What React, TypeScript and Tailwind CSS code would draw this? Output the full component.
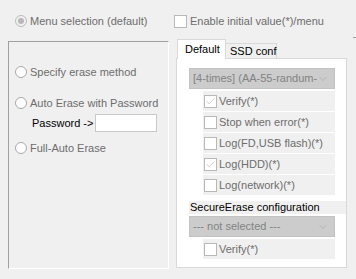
import { Check, ChevronDown } from 'lucide-react';

const font = { fontFamily: '"Liberation Sans", Arial, sans-serif' };

function Radio({ checked = false, disabled = false }: { checked?: boolean; disabled?: boolean }) {
  return (
    <span
      className={`w-[12px] h-[12px] rounded-full border flex items-center justify-center shrink-0 ${
        disabled ? 'border-[#bcbcbc] bg-[#f0f0f0]' : 'border-[#a8a8a8] bg-white'
      }`}
    >
      {checked && <span className="w-[6px] h-[6px] rounded-full bg-[#b8b8b8]" />}
    </span>
  );
}

function Box({ checked = false }: { checked?: boolean }) {
  return (
    <span className="w-[13px] h-[13px] border border-[#b8b8b8] bg-white flex items-center justify-center shrink-0">
      {checked && <Check className="w-[11px] h-[11px] text-[#b4b4b4]" strokeWidth={1.5} />}
    </span>
  );
}

function CheckRow({ label, checked = false }: { label: string; checked?: boolean }) {
  return (
    <div className="h-[20px] w-[132px] bg-[#f0f0f0] flex items-center pl-[1px] gap-[2px]">
      <Box checked={checked} />
      <span className="text-[#6d6d6d] text-[11px] leading-none whitespace-nowrap">{label}</span>
    </div>
  );
}

function Select({ text, h }: { text: string; h: string }) {
  return (
    <div className={`${h} w-[146px] bg-[#cccccc] border border-[#c3c3c3] flex items-center pl-[3px] pr-[5px]`}>
      <span className="flex-1 overflow-hidden whitespace-nowrap text-[#838383] text-[11px] leading-none">{text}</span>
      <ChevronDown className="w-[12px] h-[12px] text-[#a6a6a6]" strokeWidth={1.3} />
    </div>
  );
}

export default function App() {
  return (
    <div className="relative w-[356px] h-[279px] bg-[#f0f0f0] overflow-hidden text-[11px]" style={font}>
      {/* clipped frame edge */}
      <div className="absolute left-[353px] top-[37px] w-[4px] h-px bg-[#a0a0a0]" />

      {/* top options */}
      <div className="h-[40px] flex items-start pt-[15px]">
        <div className="w-[174px] pl-[15px] flex items-center gap-[3px] h-[12px]">
          <Radio checked disabled />
          <span className="text-[#6d6d6d] leading-none whitespace-nowrap">Menu selection (default)</span>
        </div>
        <div className="flex items-center gap-[3px] h-[12px]">
          <Box />
          <span className="text-[#6d6d6d] leading-none whitespace-nowrap">Enable initial value(*)/menu</span>
        </div>
      </div>

      <div className="flex items-start">
        {/* erase mode frame */}
        <div className="ml-[8px] mt-[1px] w-[161px] h-[228px] border border-t-[#a0a0a0] border-l-[#a0a0a0] border-r-white border-b-white flex flex-col pl-[6px]">
          <div className="mt-[24px] h-[12px] flex items-center gap-[3px]">
            <Radio />
            <span className="text-[#6d6d6d] leading-none whitespace-nowrap">Specify erase method</span>
          </div>
          <div className="mt-[19px] h-[12px] flex items-center gap-[3px]">
            <Radio />
            <span className="text-[#6d6d6d] leading-none whitespace-nowrap">Auto Erase with Password</span>
          </div>
          <div className="mt-[5px] h-[18px] flex items-center pl-[17px]">
            <span className="w-[63px] text-black leading-none whitespace-nowrap">Password -&gt;</span>
            <span className="w-[62px] h-[18px] bg-white border border-[#c8c8c8]" />
          </div>
          <div className="mt-[10px] h-[12px] flex items-center gap-[3px]">
            <Radio />
            <span className="text-[#6d6d6d] leading-none whitespace-nowrap">Full-Auto Erase</span>
          </div>
        </div>

        {/* tab control */}
        <div className="ml-[7px] w-[171px] flex flex-col">
          <div className="flex items-end h-[19px] pl-[1px] relative z-10 -mb-px">
            <div className="w-[49px] h-[20px] bg-white border border-b-0 border-[#d9d9d9] flex items-center pl-[7px] text-black leading-none">
              Default
            </div>
            <div className="w-[51px] h-[16px] bg-[#f0f0f0] border border-l-0 border-[#d9d9d9] flex items-center pl-[4px] text-black leading-none whitespace-nowrap">
              SSD conf
            </div>
          </div>
          <div className="h-[210px] bg-white border border-[#d9d9d9] flex flex-col pl-[12px] pt-[9px]">
            <Select text="[4-times] (AA-55-randum-" h="h-[21px]" />
            <div className="mt-[2px] ml-[14px] flex flex-col gap-px">
              <CheckRow label="Verify(*)" checked />
              <CheckRow label="Stop when error(*)" />
              <CheckRow label="Log(FD,USB flash)(*)" />
              <CheckRow label="Log(HDD)(*)" checked />
              <CheckRow label="Log(network)(*)" />
            </div>
            <div className="mt-[6px] h-[13px] bg-[#f0f0f0] flex items-center pl-[1px] text-black leading-none whitespace-nowrap">
              SecureErase configuration
            </div>
            <div className="mt-[2px]">
              <Select text="--- not selected ---" h="h-[21px]" />
            </div>
            <div className="mt-[2px] ml-[14px]">
              <CheckRow label="Verify(*)" />
            </div>
          </div>
        </div>
      </div>
    </div>
  );
}
